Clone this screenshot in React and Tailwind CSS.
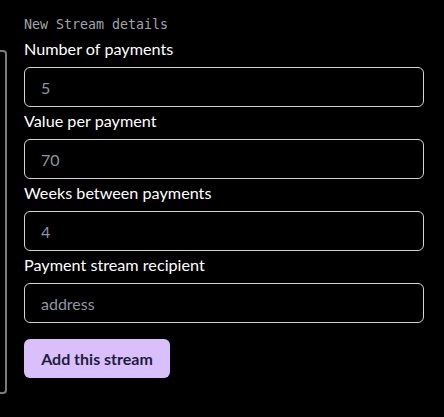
import React, { useState } from "react";

const fields = [
  { label: "Number of payments", value: "5" },
  { label: "Value per payment", value: "70" },
  { label: "Weeks between payments", value: "4" },
  { label: "Payment stream recipient", value: "", placeholder: "address" },
];

const App = () => {
  const [values, setValues] = useState(fields.map((f) => f.value));

  return (
    <div className="min-h-screen bg-black flex items-start font-['Lato','Noto_Sans',sans-serif]">
      {/* edge of the panel on the left */}
      <div className="mt-[50px] h-[344px] w-[7px] border-2 border-l-0 border-[#7a7a7a] rounded-r-[4px]" />

      <div className="ml-[17px] w-[400px] pt-[15px] flex flex-col">
        <div className="font-['DejaVu_Sans_Mono',monospace] text-[13.3px] leading-5 text-[#a0a4ab]">
          New Stream details
        </div>

        {fields.map((f, i) => (
          <div key={f.label} className="flex flex-col">
            <label className="mt-0.5 mb-1.5 text-[16.2px] leading-6 text-white">{f.label}</label>
            <input
              value={values[i]}
              placeholder={f.placeholder}
              onChange={(e) => {
                const next = [...values];
                next[i] = e.target.value;
                setValues(next);
              }}
              className="h-10 rounded-md border border-[#d4d4d4] bg-black px-4 text-base text-[#8f96a3] placeholder:text-[#8f96a3] outline-none"
            />
          </div>
        ))}

        <button className="mt-4 h-[39px] w-[146px] rounded-md bg-[#dac0fb] text-base font-bold text-[#1f1d3d]">
          Add this stream
        </button>
      </div>
    </div>
  );
};

export default App;
